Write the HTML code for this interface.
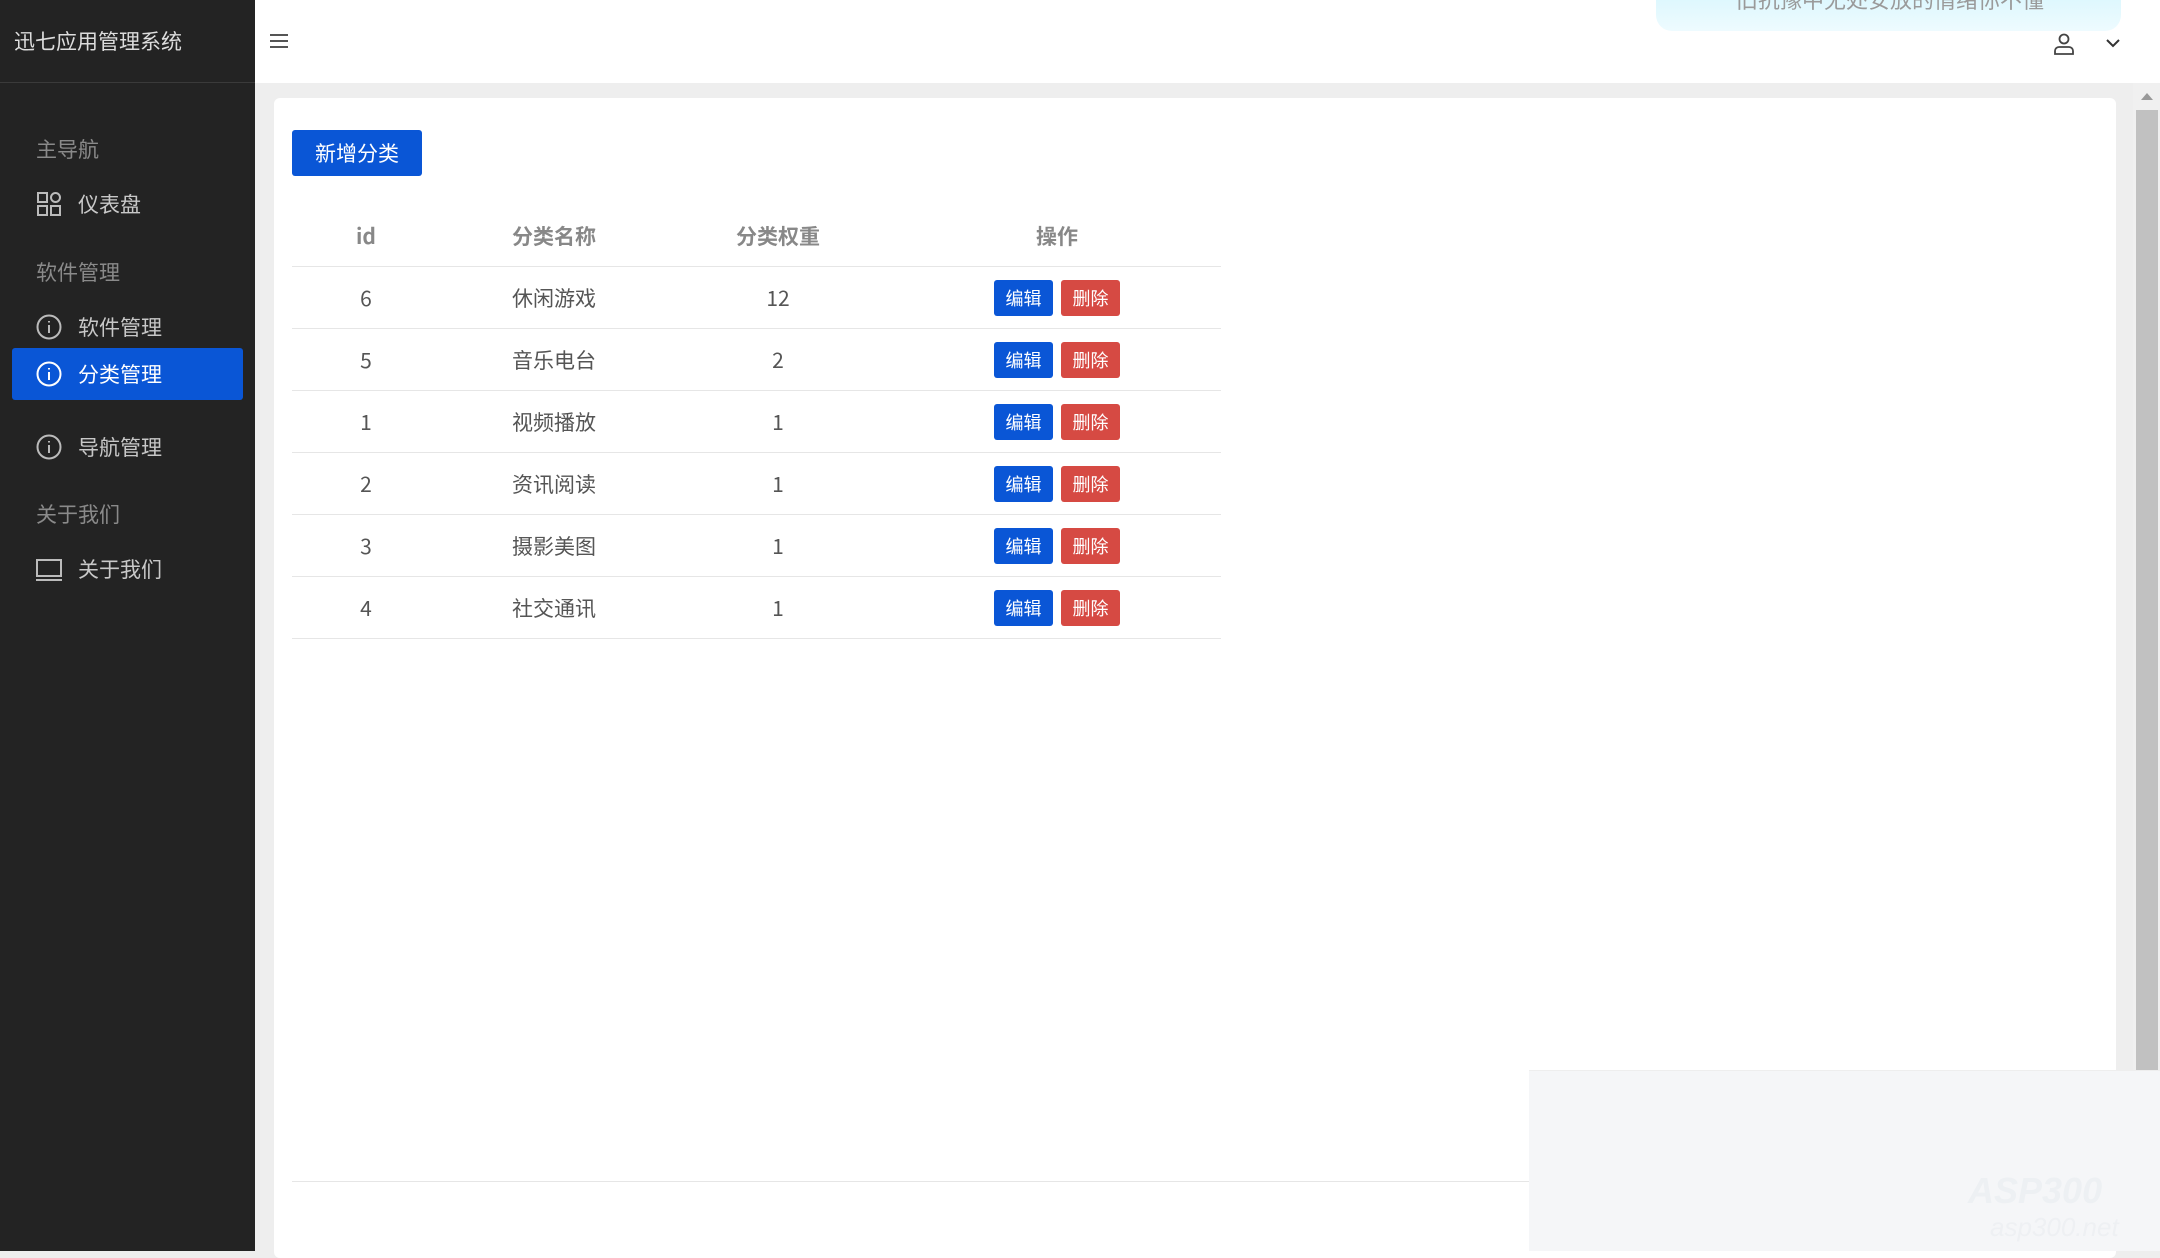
<!DOCTYPE html>
<html><head><meta charset="utf-8"><style>
*{margin:0;padding:0;box-sizing:border-box}
body{width:2160px;height:1251px;overflow:hidden;background:#eeeeee;font-family:"Noto Sans CJK SC","Liberation Sans",sans-serif;position:relative}
.side{position:absolute;left:0;top:0;width:255px;height:1251px;background:#232323}
.logo{height:83px;border-bottom:1px solid #3a3a3a;color:#ddd;font-size:21px;line-height:83px;padding-left:14px}
.lbl{position:absolute;left:36px;color:#8a8a8a;font-size:21px;line-height:30px}
.item{position:absolute;left:12px;width:231px;height:52px;color:#c8c8c8;font-size:21px;line-height:52px;padding-left:66px;border-radius:3px}
.item.act{background:#0a56d6;color:#fff}
.item svg{position:absolute;left:24px;top:13px}
.head{position:absolute;left:255px;top:0;right:0;height:83px;background:#fff}
.card{position:absolute;left:274px;top:98px;width:1842px;height:1160px;background:#fff;border-radius:6px}
.btn{position:absolute;left:292px;top:130px;width:130px;height:46px;background:#0a56d6;color:#fff;border-radius:3px;font-size:21px;line-height:46px;text-align:center}
.th,.td{position:absolute;font-size:21px;line-height:30px;text-align:center;transform:translateX(-50%)}
.th{color:#888;font-weight:bold;top:221px}
.td{color:#555}
.ln{position:absolute;left:292px;width:929px;height:1px;background:#e6e6e6}
.b{position:absolute;width:59px;height:36px;border-radius:3px;color:#fff;font-size:18px;line-height:36px;text-align:center}
</style></head><body>
<div class="side">
<div class="logo">迅七应用管理系统</div>
<div class="lbl" style="top:134px">主导航</div>
<div class="item" style="top:178px"><svg width="26" height="26" viewBox="0 0 26 26" fill="none" stroke="#bbb" stroke-width="2"><rect x="2" y="2" width="9" height="9"/><circle cx="19.5" cy="6.5" r="4.5"/><rect x="2" y="15" width="9" height="9"/><rect x="15" y="15" width="9" height="9"/></svg>仪表盘</div>
<div class="lbl" style="top:257px">软件管理</div>
<div class="item" style="top:301px"><svg width="26" height="26" viewBox="0 0 26 26" fill="none" stroke="#bbb" stroke-width="2"><circle cx="13" cy="13" r="11.5"/><path d="M13 11v8M13 7v1.5"/></svg>软件管理</div>
<div class="item act" style="top:348px"><svg width="26" height="26" viewBox="0 0 26 26" fill="none" stroke="#fff" stroke-width="2"><circle cx="13" cy="13" r="11.5"/><path d="M13 11v8M13 7v1.5"/></svg>分类管理</div>
<div class="item" style="top:421px"><svg width="26" height="26" viewBox="0 0 26 26" fill="none" stroke="#bbb" stroke-width="2"><circle cx="13" cy="13" r="11.5"/><path d="M13 11v8M13 7v1.5"/></svg>导航管理</div>
<div class="lbl" style="top:499px">关于我们</div>
<div class="item" style="top:543px"><svg width="26" height="26" viewBox="0 0 26 26" fill="none" stroke="#bbb" stroke-width="2"><rect x="1" y="4" width="24" height="16"/><path d="M0 24h26"/></svg>关于我们</div>
</div>
<div class="head">
<svg style="position:absolute;left:15px;top:34px" width="18" height="14" viewBox="0 0 18 14" stroke="#555" stroke-width="2"><path d="M0 1h18M0 7h18M0 13h18"/></svg>
<div style="position:absolute;left:1401px;top:-16px;width:465px;height:47px;border-radius:16px;background:linear-gradient(#d6f6fd,#eefbff);color:#9a9a9a;font-size:22px;line-height:30px;padding-left:80px">旧抗豫中无处安放的情绪你不懂</div>
<svg style="position:absolute;left:1798px;top:33px" width="22" height="22" viewBox="0 0 22 22" fill="none" stroke="#444" stroke-width="1.8"><circle cx="11" cy="6" r="4.5"/><path d="M2 21v-3a4 4 0 0 1 4-4h10a4 4 0 0 1 4 4v3z"/></svg>
<svg style="position:absolute;left:1851px;top:39px" width="14" height="9" viewBox="0 0 14 9" fill="none" stroke="#333" stroke-width="2"><path d="M1 1l6 6 6-6"/></svg>
</div>
<div class="card"></div>
<div class="btn">新增分类</div>
<div class="th" style="left:366px">id</div>
<div class="th" style="left:554px">分类名称</div>
<div class="th" style="left:778px">分类权重</div>
<div class="th" style="left:1057px">操作</div>
<div class="ln" style="top:266px"></div>
<div class="td" style="left:366px;top:283px">6</div><div class="td" style="left:554px;top:283px">休闲游戏</div><div class="td" style="left:778px;top:283px">12</div>
<div class="ln" style="top:328px"></div>
<div class="td" style="left:366px;top:345px">5</div><div class="td" style="left:554px;top:345px">音乐电台</div><div class="td" style="left:778px;top:345px">2</div>
<div class="ln" style="top:390px"></div>
<div class="td" style="left:366px;top:407px">1</div><div class="td" style="left:554px;top:407px">视频播放</div><div class="td" style="left:778px;top:407px">1</div>
<div class="ln" style="top:452px"></div>
<div class="td" style="left:366px;top:469px">2</div><div class="td" style="left:554px;top:469px">资讯阅读</div><div class="td" style="left:778px;top:469px">1</div>
<div class="ln" style="top:514px"></div>
<div class="td" style="left:366px;top:531px">3</div><div class="td" style="left:554px;top:531px">摄影美图</div><div class="td" style="left:778px;top:531px">1</div>
<div class="ln" style="top:576px"></div>
<div class="td" style="left:366px;top:593px">4</div><div class="td" style="left:554px;top:593px">社交通讯</div><div class="td" style="left:778px;top:593px">1</div>
<div class="ln" style="top:638px"></div>
<div class="b" style="left:994px;top:280px;background:#0a56d6">编辑</div><div class="b" style="left:1061px;top:280px;background:#d64a43">删除</div>
<div class="b" style="left:994px;top:342px;background:#0a56d6">编辑</div><div class="b" style="left:1061px;top:342px;background:#d64a43">删除</div>
<div class="b" style="left:994px;top:404px;background:#0a56d6">编辑</div><div class="b" style="left:1061px;top:404px;background:#d64a43">删除</div>
<div class="b" style="left:994px;top:466px;background:#0a56d6">编辑</div><div class="b" style="left:1061px;top:466px;background:#d64a43">删除</div>
<div class="b" style="left:994px;top:528px;background:#0a56d6">编辑</div><div class="b" style="left:1061px;top:528px;background:#d64a43">删除</div>
<div class="b" style="left:994px;top:590px;background:#0a56d6">编辑</div><div class="b" style="left:1061px;top:590px;background:#d64a43">删除</div>
<div style="position:absolute;left:292px;top:1181px;width:1240px;height:1px;background:#e6e6e6"></div>
<div style="position:absolute;left:2133px;top:83px;width:27px;height:990px;background:#f0f0f0"></div>
<div style="position:absolute;left:2136px;top:110px;width:22px;height:960px;background:#c1c1c1"></div>
<div style="position:absolute;left:2141px;top:93px;width:0;height:0;border:6px solid transparent;border-bottom:7px solid #999;border-top:0"></div>
<div style="position:absolute;left:1529px;top:1070px;width:631px;height:181px;background:#f5f6f8;border-top:1px solid #eeeeee"></div>
<div style="position:absolute;left:1968px;top:1170px;color:#edf0f3;font-size:36px;font-weight:bold;font-style:italic;font-family:'Liberation Sans',sans-serif">ASP300</div>
<div style="position:absolute;left:1990px;top:1212px;color:#eef0f3;font-size:26px;font-style:italic;font-family:'Liberation Sans',sans-serif">asp300.net</div>
</body></html>
